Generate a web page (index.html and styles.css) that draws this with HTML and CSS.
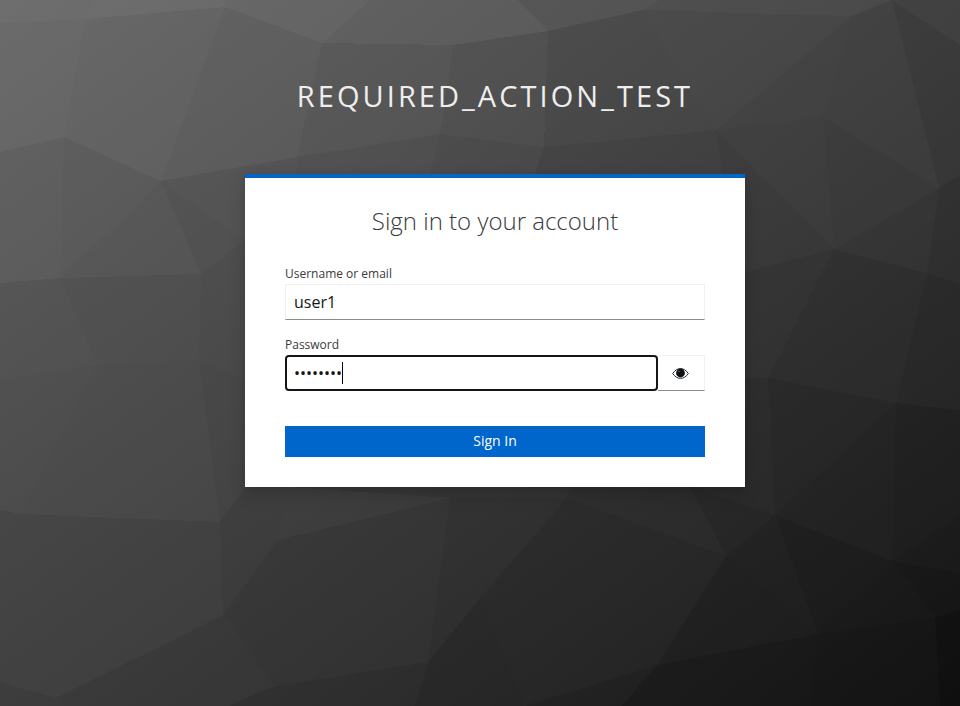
FILE: index.html
```html
<!DOCTYPE html>
<html lang="en">
<head>
    <meta charset="UTF-8">
    <meta name="viewport" content="width=device-width, initial-scale=1.0">
    <title>Sign in to required_action_test</title>
    <link rel="stylesheet" href="styles.css">
</head>
<body>
    <!-- low poly backdrop -->
    <svg class="backdrop" viewBox="0 0 960 706" aria-hidden="true">
        <polygon fill="#6e6e6e" points="0,0 95,0 85,19 0,23"/>
        <polygon fill="#6f6f6f" points="95,0 225,0 225,7 85,19"/>
        <polygon fill="#696969" points="225,0 370,0 322,43 225,7"/>
        <polygon fill="#636363" points="370,0 518,0 548,31 453,45 322,43"/>
        <polygon fill="#585858" points="518,0 660,0 643,10 548,31"/>
        <polygon fill="#515151" points="660,0 892,0 852,16 643,10"/>
        <polygon fill="#414141" points="892,0 960,0 960,45"/>
        <polygon fill="#676767" points="0,23 85,19 64,137 0,152"/>
        <polygon fill="#656565" points="85,19 225,7 161,181 64,137"/>
        <polygon fill="#5e5e5e" points="225,7 322,43 297,157 161,181"/>
        <polygon fill="#575757" points="322,43 453,45 440,134 297,157"/>
        <polygon fill="#505050" points="453,45 548,31 544,147 440,134"/>
        <polygon fill="#474747" points="548,31 643,10 716,130 544,147"/>
        <polygon fill="#484848" points="643,10 852,16 716,130"/>
        <polygon fill="#444444" points="852,16 823,117 716,130"/>
        <polygon fill="#424242" points="852,16 892,0 939,188 823,117"/>
        <polygon fill="#383838" points="892,0 960,45 960,175 939,188"/>
        <polygon fill="#5c5c5c" points="0,152 64,137 60,278 0,283"/>
        <polygon fill="#5a5a5a" points="64,137 161,181 60,278"/>
        <polygon fill="#555555" points="161,181 201,274 60,278"/>
        <polygon fill="#525252" points="161,181 297,157 297,174 245,174 245,240"/>
        <polygon fill="#4e4e4e" points="297,157 440,134 430,174 297,174"/>
        <polygon fill="#484848" points="440,134 544,147 535,174 430,174"/>
        <polygon fill="#3f3f3f" points="544,147 716,130 722,174 535,174"/>
        <polygon fill="#3b3b3b" points="716,130 834,249 745,272 745,174 722,174"/>
        <polygon fill="#3f3f3f" points="716,130 823,117 834,249"/>
        <polygon fill="#3c3c3c" points="823,117 939,188 834,249"/>
        <polygon fill="#363636" points="834,249 939,188 927,273"/>
        <polygon fill="#2f2f2f" points="939,188 960,175 960,284 927,273"/>
        <polygon fill="#4f4f4f" points="161,181 245,240 201,274"/>
        <polygon fill="#494949" points="201,274 245,240 245,381 199,360"/>
        <polygon fill="#505050" points="0,283 60,278 97,365 0,380"/>
        <polygon fill="#4d4d4d" points="60,278 201,274 199,360 97,365"/>
        <polygon fill="#4c4c4c" points="0,380 97,365 20,514 0,510"/>
        <polygon fill="#4b4b4b" points="97,365 199,360 220,522 20,514"/>
        <polygon fill="#454545" points="199,360 245,381 245,487 220,522"/>
        <polygon fill="#424242" points="0,510 20,514 56,698 0,682"/>
        <polygon fill="#414141" points="20,514 220,522 223,615 56,698"/>
        <polygon fill="#3a3a3a" points="0,682 56,698 65,706 0,706"/>
        <polygon fill="#393939" points="56,698 223,615 275,686 228,706 65,706"/>
        <polygon fill="#3c3c3c" points="220,522 278,540 223,615"/>
        <polygon fill="#353535" points="278,540 275,686 223,615"/>
        <polygon fill="#3d3d3d" points="220,522 245,487 290,487 278,540"/>
        <polygon fill="#3e3e3e" points="290,487 450,498 278,540"/>
        <polygon fill="#353535" points="278,540 450,498 428,662 275,686"/>
        <polygon fill="#2e2e2e" points="275,686 428,662 415,706 228,706"/>
        <polygon fill="#353535" points="290,487 570,487 567,498 450,498"/>
        <polygon fill="#2f2f2f" points="450,498 567,498 480,598 428,662"/>
        <polygon fill="#262626" points="428,662 480,598 525,706 415,706"/>
        <polygon fill="#282828" points="567,498 726,556 657,665 525,706 480,598"/>
        <polygon fill="#2e2e2e" points="567,498 570,487 690,487 726,556"/>
        <polygon fill="#272727" points="690,487 775,515 726,556"/>
        <polygon fill="#212121" points="726,556 775,515 818,634"/>
        <polygon fill="#1f1f1f" points="726,556 818,634 657,665"/>
        <polygon fill="#1c1c1c" points="775,515 892,561 818,634"/>
        <polygon fill="#191919" points="892,561 935,617 818,634"/>
        <polygon fill="#181818" points="657,665 818,634 810,706 622,706"/>
        <polygon fill="#212121" points="525,706 657,665 622,706"/>
        <polygon fill="#151515" points="818,634 935,617 940,706 810,706"/>
        <polygon fill="#0f0f0f" points="935,617 960,610 960,706 940,706"/>
        <polygon fill="#151515" points="892,561 960,573 960,610 935,617"/>
        <polygon fill="#1b1b1b" points="892,561 960,514 960,573"/>
        <polygon fill="#222222" points="775,515 896,403 892,561"/>
        <polygon fill="#1f1f1f" points="896,403 960,410 960,514 892,561"/>
        <polygon fill="#262626" points="768,378 896,403 775,515"/>
        <polygon fill="#2b2b2b" points="745,378 768,378 775,515 690,487 745,487"/>
        <polygon fill="#333333" points="745,272 834,249 768,378 745,378"/>
        <polygon fill="#2d2d2d" points="834,249 927,273 896,403 768,378"/>
        <polygon fill="#282828" points="927,273 960,284 960,410 896,403"/>
    </svg>

    <div class="page">
        <header class="realm-name">required_action_test</header>

        <main class="card">
            <h1 class="card-title">Sign in to your account</h1>
            <form class="login-form">
                <div class="form-group">
                    <label class="form-label" for="username">Username or email</label>
                    <input class="form-input" id="username" type="text" value="user1">
                </div>
                <div class="form-group">
                    <label class="form-label" for="password">Password</label>
                    <div class="input-group">
                        <div class="password-wrap">
                            <input class="form-input form-input-focused" id="password" type="password" value="password">
                            <span class="caret"></span>
                        </div>
                        <button class="eye-button" type="button" aria-label="Show password">
                            <svg class="eye-icon" viewBox="0 0 17 11">
                                <path class="eye-outline" d="M.7 5.5C3 2.2 5.6.6 8.5.6s5.5 1.6 7.8 4.9c-2.3 3.300-4.900 4.900-7.800 4.900S3 8.800.7 5.500z"/>
                                <circle class="eye-pupil" cx="8.5" cy="5" r="4.4"/>
                                <circle class="eye-glint" cx="7" cy="3.5" r="0.8"/>
                            </svg>
                        </button>
                    </div>
                </div>
                <button class="submit-button" type="submit">Sign In</button>
            </form>
        </main>
    </div>
</body>
</html>
```

FILE: styles.css
```css
html, body {
    height: 100%;
}

body {
    margin: 0;
    overflow: hidden;
    background-image: linear-gradient(to bottom right, #707070, #101010);
    font-family: "Open Sans", sans-serif;
    color: #151515;
}

.backdrop {
    position: absolute;
    top: 0;
    left: 0;
    width: 960px;
    height: 706px;
    shape-rendering: crispEdges;
    fill-opacity: 0.55;
}

.page {
    position: relative;
    display: flex;
    flex-direction: column;
    align-items: center;
    padding-left: 30px;
}

.realm-name {
    height: 174px;
    padding-top: 75px;
    box-sizing: border-box;
    font-size: 29px;
    line-height: 42px;
    letter-spacing: 3.05px;
    text-transform: uppercase;
    color: #eee;
}

.card {
    width: 500px;
    height: 313px;
    box-sizing: border-box;
    padding: 0 40px;
    background-color: #fff;
    border-top: 4px solid #06c;
    box-shadow: 0 8px 16px 0 rgba(3, 3, 3, 0.16), 0 0 6px 0 rgba(3, 3, 3, 0.08);
}

.card-title {
    margin: 0;
    padding-top: 23px;
    font-size: 24px;
    line-height: 40px;
    font-weight: 300;
    text-align: center;
    color: #3a3a3a;
}

.login-form {
    margin-top: 24px;
}

.form-group {
    margin-bottom: 16px;
}

.form-label {
    display: block;
    font-size: 12px;
    line-height: 18px;
    margin-bottom: 1px;
    color: #3a3a3a;
}

.form-input {
    display: block;
    width: 100%;
    height: 36px;
    box-sizing: border-box;
    padding: 5px 8px;
    font-family: inherit;
    font-size: 16px;
    color: #151515;
    background-color: #fff;
    border: 1px solid #f0f0f0;
    border-bottom-color: #8a8d90;
    border-radius: 0;
}

.form-input-focused {
    border: 2px solid #151515;
    border-radius: 4px;
    padding: 4px 7px;
}

.input-group {
    display: flex;
}

.password-wrap {
    position: relative;
    flex: 1;
}

.caret {
    position: absolute;
    left: 57px;
    top: 7px;
    width: 1px;
    height: 22px;
    background-color: #000;
}

.eye-button {
    display: flex;
    align-items: center;
    justify-content: center;
    width: 47px;
    height: 36px;
    padding: 0;
    background-color: #fff;
    border: 1px solid #f0f0f0;
    border-left: none;
    border-bottom-color: #8a8d90;
}

.eye-icon {
    width: 17px;
    height: 11px;
    margin: 1px 1px 0 0;
}

.eye-outline {
    fill: none;
    stroke: #1d2b3a;
    stroke-width: 1;
}

.eye-pupil {
    fill: #101010;
}

.eye-glint {
    fill: #fff;
    fill-opacity: 0.35;
}

.submit-button {
    display: block;
    width: 100%;
    height: 31px;
    margin-top: 35px;
    padding: 0 0 2px;
    font-family: inherit;
    font-size: 14px;
    color: #fff;
    background-color: #06c;
    border: none;
}
```
